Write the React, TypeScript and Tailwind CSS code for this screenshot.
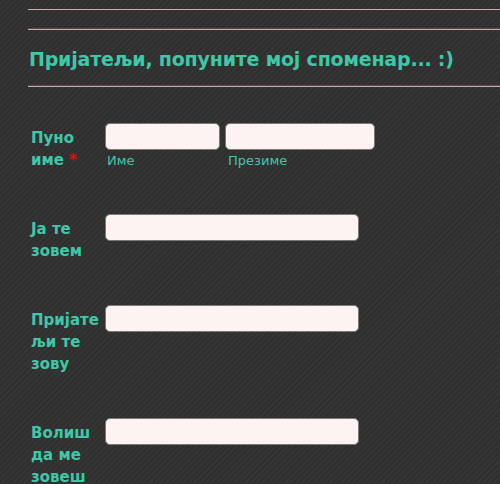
import React from "react";

const teal = "text-[#3fc8a8]";

interface Row {
    lines: string[];
    required?: boolean;
}

const rows: Row[] = [
    { lines: ["Ја те", "зовем"] },
    { lines: ["Пријате", "љи те", "зову"] },
    { lines: ["Волиш", "да ме", "зовеш"] },
];

const Label = ({ lines, required }: Row) => (
    <div className={`ml-[3px] w-[74px] shrink-0 pt-[4px] text-[15px] font-bold leading-[22px] ${teal}`}>
        {lines.map((line, i) => (
            <div key={i} className="whitespace-nowrap">
                {line}
                {required && i === lines.length - 1 && <span className="ml-[5px] text-[#e01010]">*</span>}
            </div>
        ))}
    </div>
);

const Input = ({ width }: { width: string }) => (
    <input
        type="text"
        className={`${width} h-[27px] rounded-[5px] border border-[#7a7a7a] bg-[#fdf3f3] outline-none`}
    />
);

export default function App() {
    return (
        <div
            className="h-[484px] w-[500px] overflow-hidden bg-[#333333] bg-[repeating-linear-gradient(-45deg,#353535_0px,#353535_2px,#2f2f2f_2px,#2f2f2f_4px)] pl-[28px] font-['DejaVu_Sans',sans-serif]"
        >
            <div className="mt-[9px] h-px bg-[#c9aaa6]" />
            <div className="mt-[18px] h-[2px] border-t border-[#5a4a48] bg-[#c9aaa6]" />
            <h1 className={`mt-[17px] pl-[1px] text-[19px] font-bold leading-[24px] tracking-[-0.2px] ${teal}`}>
                Пријатељи, попуните мој споменар... :)
            </h1>
            <div className="mt-[14px] h-[2px] border-t border-[#5a4a48] bg-[#c9aaa6]" />

            <div className="mt-[36px] flex flex-col gap-[43px]">
                <div className="flex">
                    <Label lines={["Пуно", "име"]} required />
                    <div className="flex gap-[5px]">
                        <div className="flex flex-col">
                            <Input width="w-[115px]" />
                            <span className={`ml-[2px] mt-[2px] text-[13px] leading-[17px] ${teal}`}>Име</span>
                        </div>
                        <div className="flex flex-col">
                            <Input width="w-[150px]" />
                            <span className={`ml-[3px] mt-[2px] text-[13px] leading-[17px] ${teal}`}>Презиме</span>
                        </div>
                    </div>
                </div>
                {rows.map((row, i) => (
                    <div key={i} className="flex">
                        <Label {...row} />
                        <div>
                            <Input width="w-[254px]" />
                        </div>
                    </div>
                ))}
            </div>
        </div>
    );
}
